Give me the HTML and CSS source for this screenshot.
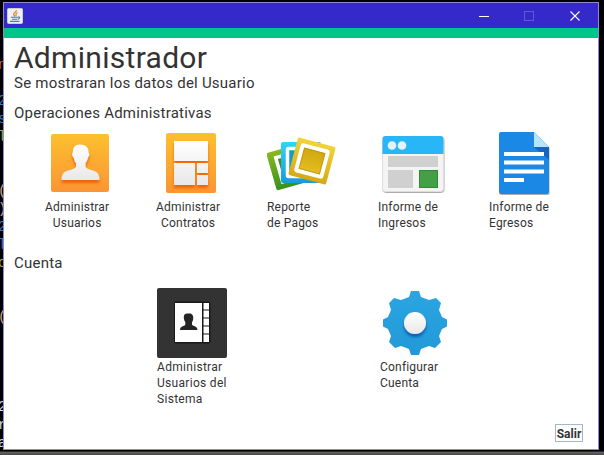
FILE: index.html
```html
<!DOCTYPE html>
<html lang="es">
<head>
<meta charset="utf-8">
<title>Administrador</title>
<link rel="stylesheet" href="styles.css">
</head>
<body>
<div class="editor" aria-hidden="true">
  <span class="orange">n</span><span></span><span class="blue">2</span><span class="blue">s</span><span class="green">l</span><span></span><span></span><span class="sand">(</span><span class="sand">)</span><span class="blue">2</span><span class="blue">l</span><span class="green">c</span><span></span><span></span><span class="sand">(</span><span></span><span></span><span></span><span></span><span class="pale">2</span><span class="pale">r</span><span class="pale">a</span>
</div>
<main class="window">
  <header class="titlebar">
    <svg class="java" width="16" height="16" viewBox="0 0 16 16">
      <rect x=".5" y=".5" width="15" height="15" rx="1" fill="#edf0f0" stroke="#c4cdd2"/>
      <path d="M9.300 2C10 4 6 5 6.600 6.700L8 8.500M10.500 4.500C8 5.500 9.700 6.700 8.700 8" fill="none" stroke="#e88932" stroke-width="1.300"/>
      <path d="M4 9.300h7M5 11.200h5.500M3 13.400h9.500M11 9.200c2-.8 2.500 1.300 0 2" fill="none" stroke="#527896" stroke-width="1.100"/>
    </svg>
    <svg class="controls" width="105" height="12" viewBox="0 0 105 12">
      <path d="M0 6.500h10" stroke="#fff"/>
      <rect x="45.500" y="1.500" width="9" height="9" fill="none" stroke="#6259d6"/>
      <path d="M91.500 1.500l9 9m0-9l-9 9" stroke="#fff" stroke-width="1.100"/>
    </svg>
  </header>
  <div class="accent"></div>
  <div class="content">
    <h1>Administrador</h1>
    <p class="sub">Se mostraran los datos del Usuario</p>
    <h2 class="ops">Operaciones Administrativas</h2>
    <section class="tiles">
      <div class="tile">
        <svg width="72" height="68" viewBox="0 0 72 68">
          <defs>
            <linearGradient id="amber" x1="0" y1="0" x2="0" y2="1"><stop stop-color="#fcc02d"/><stop offset="1" stop-color="#fa9535"/></linearGradient>
            <linearGradient id="white" x1="0" y1="0" x2="0" y2="1"><stop stop-color="#fff"/><stop offset="1" stop-color="#e8e8e8"/></linearGradient>
            <filter id="glow" x="-30%" y="-30%" width="160%" height="170%"><feDropShadow dx="0" dy="3" stdDeviation="1.500" flood-color="#f45c00" flood-opacity=".9"/></filter>
          </defs>
          <rect x="6" y="4" width="58" height="58" rx="2" fill="url(#amber)"/>
          <path filter="url(#glow)" fill="url(#white)" d="M35 14.500c-5 0-7.500 3.500-7 8-1.500 0-1 4 .7 5 .5 3 1.300 4.500 2.300 5.500v4c-2 3-10 3-12.500 6-1.500 2-2 4-2 7h38c0-3-.5-5-2-7-2.500-3-10-3-12-6v-4c1.200-1 2-3 2.400-5.500 1.600-1.500 2.100-4.500.6-5 .5-5-3-8-8.500-8z"/>
        </svg>
        <p class="center">Administrar<br>Usuarios</p>
      </div>
      <div class="tile">
        <svg width="72" height="68" viewBox="0 0 72 68">
          <rect x="10" y="3" width="50" height="60" rx="2" fill="url(#amber)"/>
          <path filter="url(#glow)" fill="url(#white)" d="M18 11h34v20H18zM18 33h21v22H18zM41 33h11v10H41zM41 45h11v10H41z"/>
        </svg>
        <p class="center">Administrar<br>Contratos</p>
      </div>
      <div class="tile">
        <svg width="72" height="68" viewBox="0 0 72 68">
          <defs>
            <linearGradient id="gold" x1="0" y1="0" x2="0" y2="1"><stop stop-color="#f1d438"/><stop offset="1" stop-color="#d5a916"/></linearGradient>
            <linearGradient id="golden" x1="0" y1="0" x2="0" y2="1"><stop stop-color="#cfa60f"/><stop offset="1" stop-color="#e6bf22"/></linearGradient>
            <linearGradient id="leaf" x1="0" y1="0" x2="0" y2="1"><stop stop-color="#89b91f"/><stop offset="1" stop-color="#37911b"/></linearGradient>
            <linearGradient id="sky" x1="0" y1="0" x2="0" y2="1"><stop stop-color="#32d4f5"/><stop offset="1" stop-color="#169dd6"/></linearGradient>
          </defs>
          <g transform="rotate(-16 20 38)"><rect x="4" y="18" width="40" height="39" rx="2" fill="url(#leaf)"/><rect x="12" y="25" width="26" height="25" fill="#448c18" stroke="#fff" stroke-width="3.500"/></g>
          <rect x="14" y="12" width="40" height="41" rx="2" fill="url(#sky)"/>
          <rect x="20.500" y="18.500" width="27" height="28" rx="1" fill="#159ac8" stroke="#fff" stroke-width="3.500"/>
          <g transform="rotate(15 45 31)"><rect x="25.500" y="11.500" width="39" height="39" rx="2" fill="url(#gold)"/><rect x="32" y="18" width="26" height="26" rx="1" fill="url(#golden)" stroke="#fff" stroke-width="4"/><rect x="34.500" y="20.500" width="21" height="21" fill="none" stroke="#b99010" stroke-opacity=".7"/></g>
        </svg>
        <p>Reporte<br>de Pagos</p>
      </div>
      <div class="tile">
        <svg width="72" height="68" viewBox="0 0 72 68">
          <defs><filter id="soft"><feDropShadow dx=".5" dy="1" stdDeviation=".6" flood-color="#777" flood-opacity=".6"/></filter></defs>
          <rect x="4.500" y="6.500" width="61" height="55" rx="3" fill="#f4f4f4" stroke="#ddd" filter="url(#soft)"/>
          <path d="M7.500 6h55a3 3 0 0 1 3 3v15h-61V9a3 3 0 0 1 3-3z" fill="#29b6f6"/>
          <circle cx="14" cy="15.500" r="4.300" fill="#e4f3fa"/><circle cx="24" cy="15.500" r="4.300" fill="#e4f3fa"/>
          <path d="M10 26h50v11H10zM10 40h25v18H10z" fill="#d0d0d0"/>
          <rect x="41.500" y="40.500" width="18" height="17" fill="#43a047" stroke="#2a8d2f"/>
        </svg>
        <p>Informe de<br>Ingresos</p>
      </div>
      <div class="tile">
        <svg width="72" height="68" viewBox="0 0 72 68">
          <path filter="url(#soft)" fill="#1e88e5" d="M12 2h33l15 15v45a2 2 0 0 1-2 2H12a2 2 0 0 1-2-2V4a2 2 0 0 1 2-2z"/>
          <path d="M45 17h15v13z" fill="#1565c0"/><path d="M45 2l15 15H45z" fill="#b3e5fc"/>
          <path d="M15 24h40M15 32.500h40M15 41.500h40M15 50h20" stroke="#fff" stroke-width="4"/>
        </svg>
        <p>Informe de<br>Egresos</p>
      </div>
    </section>
    <h2 class="account">Cuenta</h2>
    <section class="tiles accounts">
      <div class="tile">
        <svg width="72" height="70" viewBox="0 0 72 70">
          <rect width="70" height="70" rx="2" fill="#333"/>
          <rect x="17" y="13.500" width="36.500" height="42" rx="2" fill="#181818"/>
          <rect x="18" y="15" width="27" height="39" fill="#fff"/>
          <path d="M46.500 15h5.500v6.500h-5.500zM46.500 22.500h5.500v7h-5.500zM46.500 30.500h5.500v7h-5.500zM46.500 38.500h5.500v7h-5.500zM46.500 46.500h5.500v7.500h-5.500z" fill="#fff"/>
          <path fill="#252525" d="M30 25.500c-3 0-3.500 3-3 5.500.2 1.500 1 2.500 1.300 3.200v2.500c-1 1.500-5.300 1.200-5.300 5.300h17.500c0-4-4.300-3.800-5.500-5.300v-2.500c.6-.7 1-1.700 1.200-3.200.5-3-1-6-4.200-5.500z"/>
        </svg>
        <p class="wide">Administrar<br>Usuarios del<br>Sistema</p>
      </div>
      <div class="tile">
        <svg width="72" height="70" viewBox="0 0 72 70">
          <defs>
            <linearGradient id="blue" x1="0" y1="0" x2="0" y2="1"><stop stop-color="#2ba6e3"/><stop offset="1" stop-color="#2199d6"/></linearGradient>
            <filter id="deep" x="-50%" y="-50%" width="200%" height="200%"><feDropShadow dx="0" dy="3" stdDeviation="1.700" flood-color="#0057b8" flood-opacity=".9"/></filter>
          </defs>
          <path fill="url(#blue)" d="M31 3h8l2 6 8 3 7-2 5 5-2 7 3 7 5 2.500v7l-5 2.500-3 7 2 6-6 6-6-2-8 3-2 6h-8l-2-6-8-3-6 2-6-6 2-6-3-7-5-2.500v-7l5-2.500 3-7-2-7 5-5 7 2 8-3z"/>
          <circle cx="35" cy="35" r="11" fill="url(#white)" filter="url(#deep)"/>
        </svg>
        <p>Configurar<br>Cuenta</p>
      </div>
    </section>
    <footer><button type="button">Salir</button></footer>
  </div>
</main>
</body>
</html>
```
FILE: styles.css
```css
* { box-sizing: border-box; }
body {
  margin: 0;
  width: 604px;
  height: 455px;
  overflow: hidden;
  position: relative;
  padding: 2px 5px 0 3px;
  background: linear-gradient(#000 451px, #292929 451px, #292929 452px, #666 452px, #484848 455px);
  color: #333;
  font-family: Roboto, "Liberation Sans", sans-serif;
}
.editor {
  position: absolute;
  left: 0;
  top: 56px;
  width: 3px;
  overflow: hidden;
  font: 14px/18px "Liberation Mono", monospace;
}
.editor span { display: block; height: 18px; width: 8px; margin-left: -2px; }
.orange { color: #c76035; }
.blue { color: #347cc0; }
.green { color: #8fbe38; }
.sand { color: #d4a878; }
.pale { color: #b9ddef; }
.window {
  width: 596px;
  height: 448px;
  display: flex;
  flex-direction: column;
  border: 1px solid #9186d2;
  background: #fff;
}
.titlebar {
  height: 25px;
  flex: none;
  padding: 0 18px 0 3px;
  display: flex;
  justify-content: space-between;
  align-items: center;
  background: #3529ca;
}
.titlebar svg { display: block; }
.controls { margin-right: -4px; }
.accent { height: 10px; flex: none; background: #00c58a; }
.content { flex: 1; display: flex; flex-direction: column; padding-left: 10px; }
h1, h2, p { margin: 0; font-weight: 400; white-space: nowrap; }
h1 { height: 36px; font-size: 30px; line-height: 40px; letter-spacing: .3px; }
.sub { font-size: 15px; line-height: 18px; letter-spacing: .23px; }
h2 { font-size: 15px; line-height: 18px; letter-spacing: .23px; }
.ops { margin-top: 12px; }
.tiles { display: grid; grid-template-columns: repeat(5, 111px); margin: 8px 0 0 31px; }
.tile svg { display: block; }
.tile p { width: max-content; margin-top: 1px; font-size: 12px; line-height: 16px; letter-spacing: .2px; }
.tile .wide { letter-spacing: .3px; }
.tile .center { text-align: center; }
.account { margin-top: 23px; }
.accounts { grid-template-columns: 223px 111px; margin: 16px 0 0 143px; }
footer { margin-top: auto; display: flex; justify-content: flex-end; padding: 0 15px 7px 0; }
button {
  width: 28px;
  height: 18px;
  padding: 0;
  border: 1px solid #a3b8cc;
  background: #fff;
  color: #333;
  font: bold 12px/18px Roboto, sans-serif;
}
```
